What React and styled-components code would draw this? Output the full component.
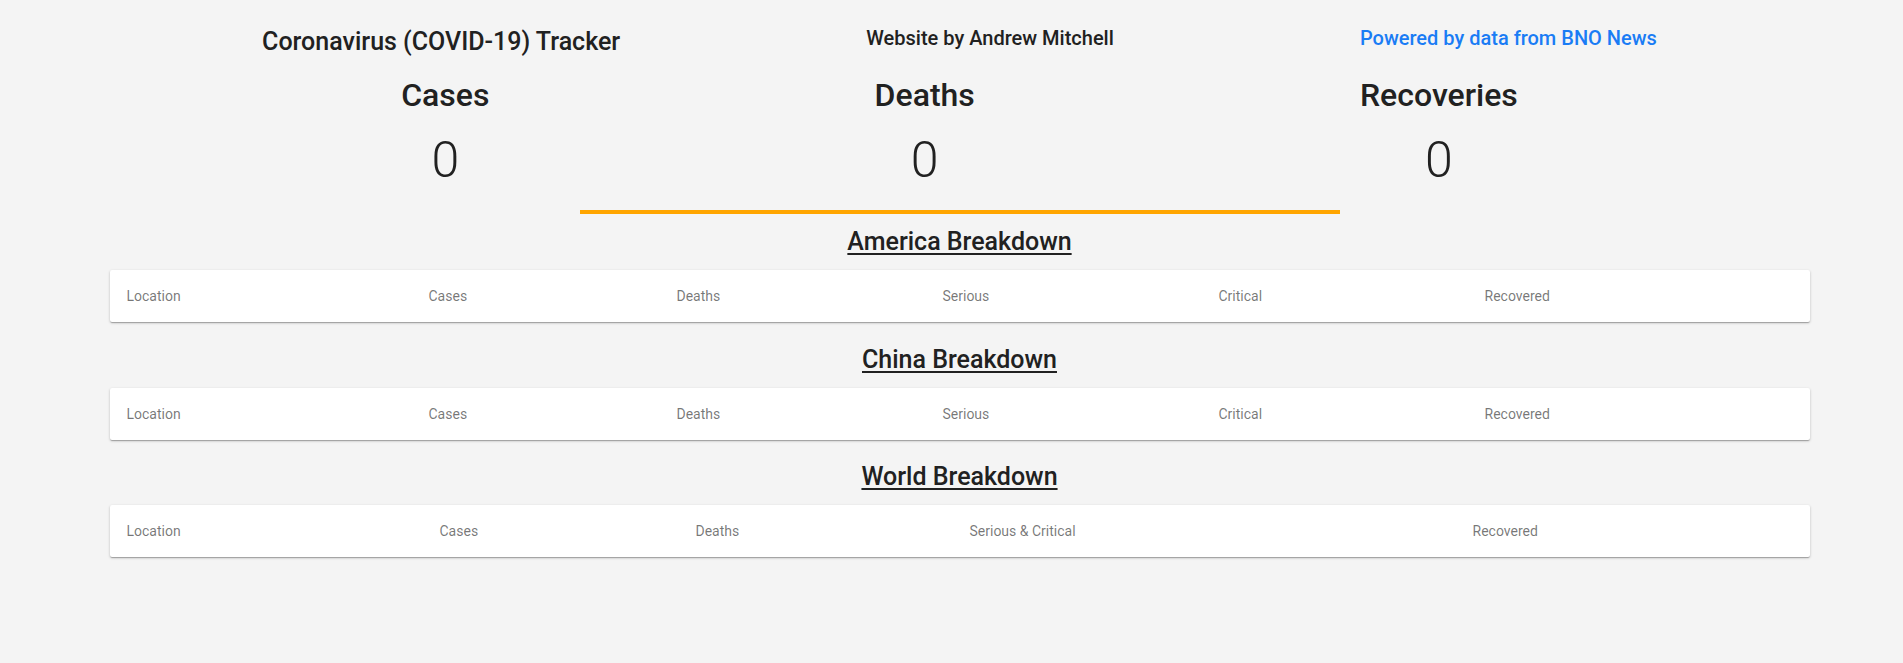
import React from 'react';
import styled, { createGlobalStyle } from 'styled-components';

const GlobalStyle = createGlobalStyle`
  body {
    margin: 0;
    background: #f4f4f4;
    font-family: Roboto, "Liberation Sans", Arial, sans-serif;
    color: #212121;
  }
`;

const Page = styled.div`
  padding: 26px 0 40px 16px;
`;

const Row = styled.div`
  display: flex;
  justify-content: space-evenly;
  align-items: flex-start;
  margin-top: ${props => props.top || 0}px;
`;

const Title = styled.div`
  font-size: 25px;
  line-height: 29px;
  font-weight: 500;
  margin-top: 1px;
`;

const Credit = styled.div`
  font-size: 20px;
  line-height: 24px;
  font-weight: 500;
  color: ${props => (props.link ? '#1a7cf5' : '#212121')};
`;

const Stat = styled.div`
  display: flex;
  flex-direction: column;
  align-items: center;
`;

const StatLabel = styled.div`
  font-size: 32px;
  line-height: 38px;
  font-weight: 500;
`;

const StatValue = styled.div`
  font-size: 50px;
  line-height: 60px;
  font-weight: 300;
  margin-top: 16px;
`;

const Divider = styled.div`
  width: 760px;
  height: 4px;
  background: #ffa500;
  margin: 20px auto 13px;
`;

const Section = styled.section`
  display: flex;
  flex-direction: column;
  align-items: center;
  margin-bottom: 22.5px;
`;

const SectionTitle = styled.h2`
  margin: 0 0 14px;
  font-size: 25px;
  line-height: 29px;
  font-weight: 500;
  text-decoration: underline;
  text-decoration-thickness: 2px;
  text-underline-offset: 3px;
`;

const Table = styled.div`
  width: 1700px;
  height: 52px;
  background: #fff;
  border-radius: 2px;
  box-shadow: 0px 1px 3px 0px rgba(0,0,0,0.2),
              0px 1px 1px 0px rgba(0,0,0,0.14),
              0px 2px 1px -1px rgba(0,0,0,0.12);
  display: grid;
  grid-template-columns: ${props => props.cols};
  align-items: center;
`;

const HeadCell = styled.div`
  padding-left: 17px;
  font-size: 14px;
  font-weight: 400;
  color: rgba(0,0,0,0.54);
`;

const regionCols = '302px 248px 266px 276px 266px 342px';
const regionHeads = ['Location', 'Cases', 'Deaths', 'Serious', 'Critical', 'Recovered'];

const sections = [
  {name: 'America Breakdown', cols: regionCols, heads: regionHeads},
  {name: 'China Breakdown', cols: regionCols, heads: regionHeads},
  {
    name: 'World Breakdown',
    cols: '313px 256px 274px 503px 354px',
    heads: ['Location', 'Cases', 'Deaths', 'Serious & Critical', 'Recovered'],
  },
];

const stats = [
  {label: 'Cases', value: 0},
  {label: 'Deaths', value: 0},
  {label: 'Recoveries', value: 0},
];

export default function App() {
  return (
    <Page>
      <GlobalStyle />
      <Row>
        <Title>Coronavirus (COVID-19) Tracker</Title>
        <Credit>Website by Andrew Mitchell</Credit>
        <Credit link>Powered by data from BNO News</Credit>
      </Row>
      <Row top={20}>
        {stats.map(s => (
          <Stat key={s.label}>
            <StatLabel>{s.label}</StatLabel>
            <StatValue>{s.value}</StatValue>
          </Stat>
        ))}
      </Row>
      <Divider />
      {sections.map(sec => (
        <Section key={sec.name}>
          <SectionTitle>{sec.name}</SectionTitle>
          <Table cols={sec.cols}>
            {sec.heads.map(h => (
              <HeadCell key={h}>{h}</HeadCell>
            ))}
          </Table>
        </Section>
      ))}
    </Page>
  );
}
